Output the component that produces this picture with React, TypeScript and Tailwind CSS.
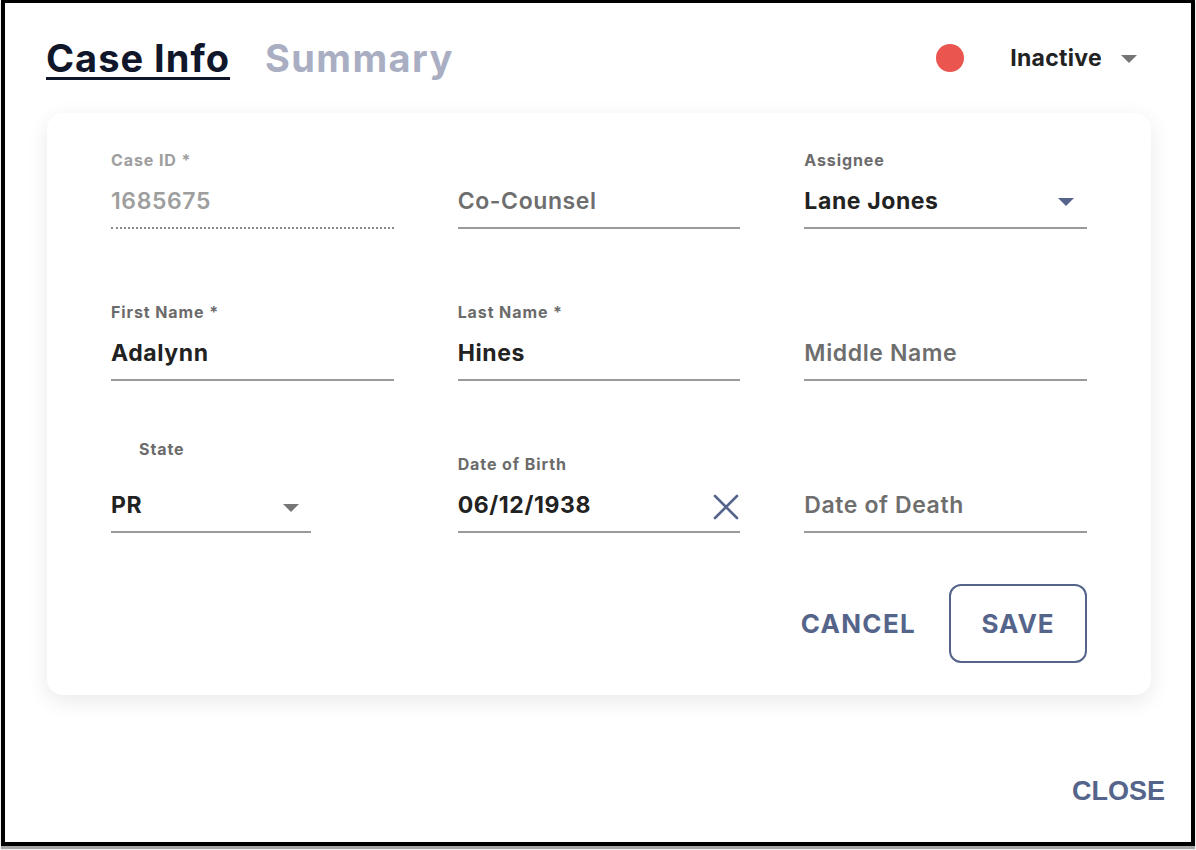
import React from 'react';

const Caret: React.FC<{ color: string }> = ({ color }) => (
  <svg width="16" height="8" viewBox="0 0 16 8" className="shrink-0">
    <path d="M0 0 L16 0 L8 8 Z" fill={color} />
  </svg>
);

const Field: React.FC<{
  label?: string;
  value: string;
  tone?: 'value' | 'placeholder' | 'disabled';
  dotted?: boolean;
  right?: React.ReactNode;
}> = ({ label, value, tone = 'value', dotted, right }) => {
  const valueColor =
    tone === 'disabled' ? 'text-[#9e9e9e] font-semibold' : tone === 'placeholder' ? 'text-[#6e6e6e] font-semibold' : 'text-[#222] font-bold';
  return (
    <div className="flex flex-col">
      {label && (
        <div className={`text-[16px] leading-[20px] font-bold tracking-[0.9px] ${tone === 'disabled' ? 'text-[#9e9e9e]' : 'text-[#6b6b6b]'}`}>{label}</div>
      )}
      <div
        className={`flex items-center justify-between ${label ? 'mt-[16px]' : ''} pb-[11px] ${
          dotted ? 'border-b-2 border-dotted border-[#8a8a8a]' : 'border-b-2 border-[#9a9a9a]'
        }`}
      >
        <span className={`text-[23px] leading-[30px] tracking-[0.6px] ${valueColor}`}>{value}</span>
        {right}
      </div>
    </div>
  );
};

const App: React.FC = () => {
  return (
    <div className="w-[1196px] h-[850px] bg-white font-['Inter',sans-serif]">
      <div className="ml-[1px] w-[1194px] h-[846px] border-[4px] border-t-[3px] border-black bg-white flex flex-col shadow-[0_3px_1px_rgba(0,0,0,0.35)]">
        {/* Header */}
        <div className="h-[110px] flex items-center pl-[41px] pr-[54px]">
          <span className="text-[38px] font-bold tracking-[1px] text-[#10172a] underline decoration-[3px] underline-offset-[5px]">Case Info</span>
          <span className="ml-[35px] text-[38px] font-bold tracking-[1.4px] text-[#a9aec2]">Summary</span>
          <div className="ml-auto flex items-center">
            <span className="w-[28px] h-[28px] rounded-full bg-[#eb5550]" />
            <span className="ml-[46px] text-[23px] font-bold tracking-[0.3px] text-[#222]">Inactive</span>
            <span className="ml-[19px] mt-[2px]">
              <Caret color="#757575" />
            </span>
          </div>
        </div>

        {/* Card */}
        <div className="ml-[42px] w-[1104px] rounded-[16px] bg-white shadow-[0_6px_22px_rgba(0,0,0,0.09)] px-[64px] pt-[37px] pb-[32px]">
          <div className="grid grid-cols-3 gap-x-[64px] gap-y-[73px] items-end">
            <Field label="Case ID *" value="1685675" tone="disabled" dotted />
            <Field value="Co-Counsel" tone="placeholder" />
            <Field
              label="Assignee"
              value="Lane Jones"
              right={
                <span className="mr-[13px] mt-[2px]">
                  <Caret color="#55648a" />
                </span>
              }
            />

            <Field label="First Name *" value="Adalynn" />
            <Field label="Last Name *" value="Hines" />
            <Field value="Middle Name" tone="placeholder" />

            <div className="-mt-[15px] flex flex-col w-[200px]">
              <div className="ml-[28px] text-[16px] leading-[20px] font-bold tracking-[0.9px] text-[#6b6b6b]">State</div>
              <div className="mt-[31px] flex items-center justify-between pb-[11px] border-b-2 border-[#9a9a9a]">
                <span className="text-[23px] leading-[30px] tracking-[0.6px] font-bold text-[#222]">PR</span>
                <span className="mr-[12px] mt-[6px]">
                  <Caret color="#757575" />
                </span>
              </div>
            </div>
            <Field
              label="Date of Birth"
              value="06/12/1938"
              right={
                <svg width="26" height="26" viewBox="0 0 26 26" className="mr-[1px] mt-[4px]">
                  <path d="M2 2 L24 24 M24 2 L2 24" stroke="#55648a" strokeWidth="2.6" strokeLinecap="round" />
                </svg>
              }
            />
            <Field value="Date of Death" tone="placeholder" />
          </div>

          <div className="mt-[51px] flex items-center justify-end">
            <button className="text-[26px] font-bold text-[#55648a] tracking-[1.3px]">CANCEL</button>
            <button className="ml-[33px] w-[138px] h-[79px] rounded-[12px] border-2 border-[#55648a] text-[26px] font-bold tracking-[1px] text-[#55648a]">
              SAVE
            </button>
          </div>
        </div>

        {/* Footer */}
        <div className="flex-1 flex items-end justify-end pr-[26px] pb-[31px]">
          <button className="text-[27px] font-bold text-[#55648a] font-['Liberation_Sans',sans-serif]">CLOSE</button>
        </div>
      </div>
    </div>
  );
};

export default App;
